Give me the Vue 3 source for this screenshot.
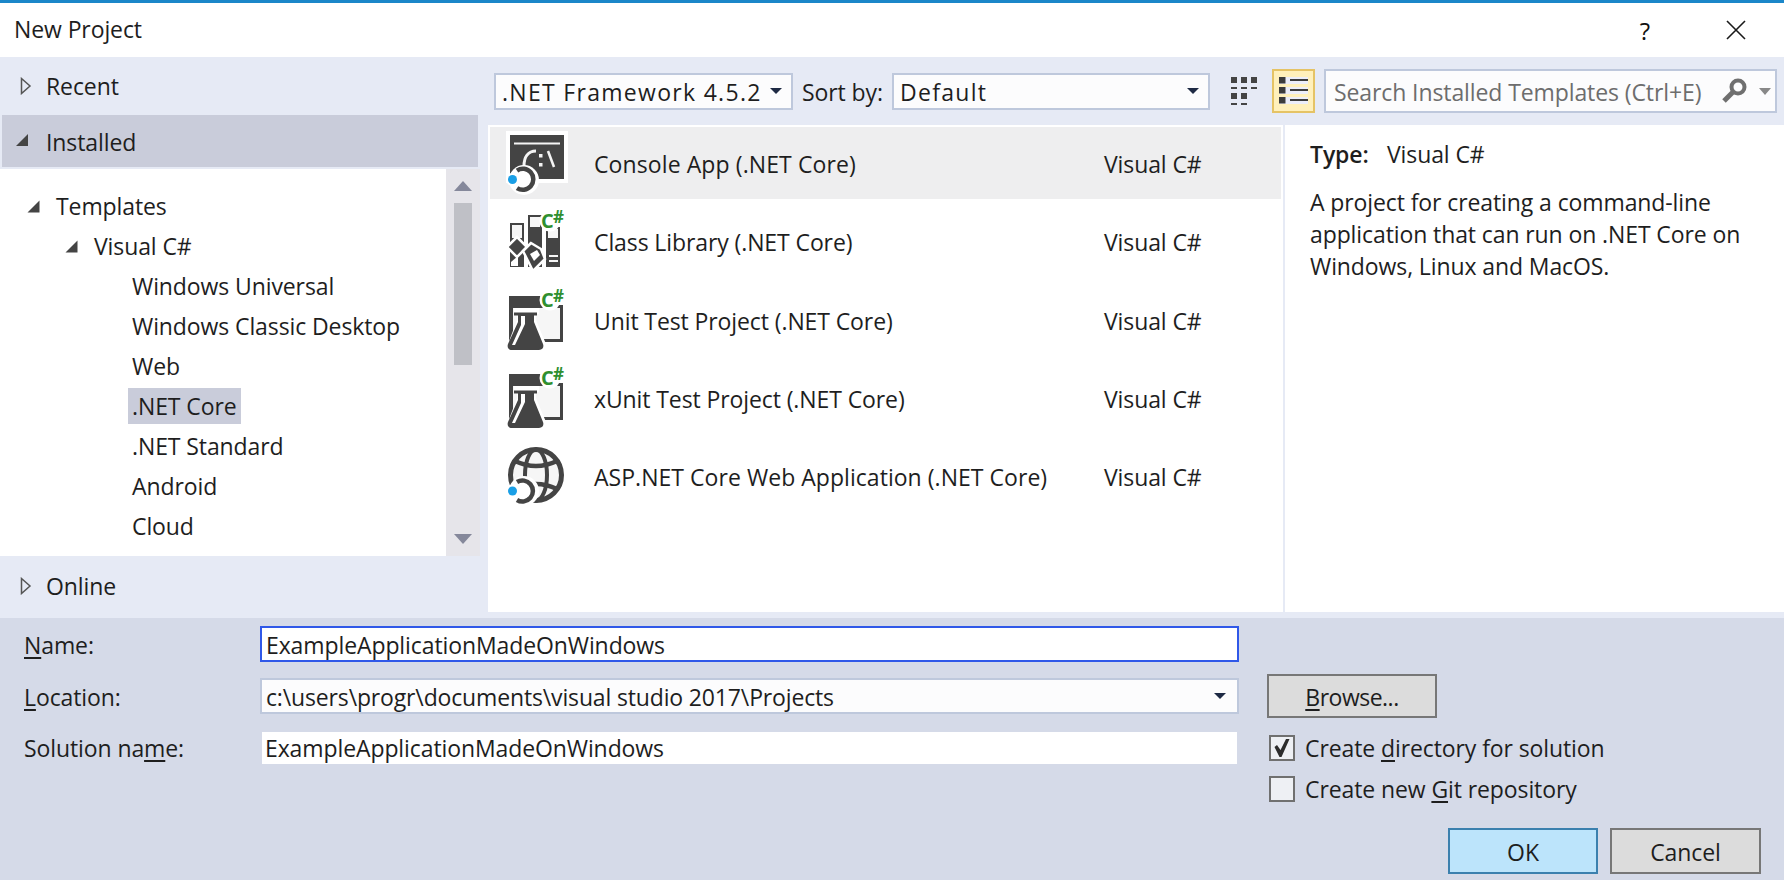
<script setup>
const tree = [
  { label: 'Windows Universal' },
  { label: 'Windows Classic Desktop' },
  { label: 'Web' },
  { label: '.NET Core', selected: true },
  { label: '.NET Standard' },
  { label: 'Android' },
  { label: 'Cloud' }
]
const templates = [
  { name: 'Console App (.NET Core)', icon: 'console', selected: true },
  { name: 'Class Library (.NET Core)', icon: 'library' },
  { name: 'Unit Test Project (.NET Core)', icon: 'test' },
  { name: 'xUnit Test Project (.NET Core)', icon: 'test' },
  { name: 'ASP.NET Core Web Application (.NET Core)', icon: 'web' }
]
</script>

<template>
  <div class="dialog">
    <header class="titlebar">
      <span class="title">New Project</span>
      <span class="help">?</span>
      <svg class="close" width="20" height="20" viewBox="0 0 20 20"><path d="M1 1L19 19M19 1L1 19" stroke="#1a1a1a" stroke-width="1.6" fill="none"/></svg>
    </header>

    <section class="upper">
      <aside class="left">
        <div class="head recent">
          <svg class="arrow" width="12" height="18" viewBox="0 0 12 18"><path d="M1.5 1.5L10 9L1.5 16.5Z" fill="none" stroke="#555" stroke-width="1.5"/></svg>
          <span>Recent</span>
        </div>
        <div class="head installed">
          <svg class="arrow-down" width="14" height="14" viewBox="0 0 14 14"><path d="M13 1V13H1Z" fill="#444"/></svg>
          <span>Installed</span>
        </div>
        <div class="treewrap">
          <div class="tree">
            <div class="node lvl0">
              <svg width="13" height="13" viewBox="0 0 13 13"><path d="M12.5 .5V12.5H.5Z" fill="#444"/></svg>
              <span>Templates</span>
            </div>
            <div class="node lvl1">
              <svg width="13" height="13" viewBox="0 0 13 13"><path d="M12.5 .5V12.5H.5Z" fill="#444"/></svg>
              <span>Visual C#</span>
            </div>
            <div v-for="t in tree" :key="t.label" class="node lvl2">
              <span class="leaf" :class="{ on: t.selected }">{{ t.label }}</span>
            </div>
          </div>
          <div class="scrollbar">
            <span class="sb-up"></span>
            <span class="sb-thumb"></span>
            <span class="sb-down"></span>
          </div>
        </div>
        <div class="head online">
          <svg class="arrow" width="12" height="18" viewBox="0 0 12 18"><path d="M1.5 1.5L10 9L1.5 16.5Z" fill="none" stroke="#555" stroke-width="1.5"/></svg>
          <span>Online</span>
        </div>
      </aside>

      <div class="main">
        <div class="toolbar">
          <div class="combo framework"><span>.NET Framework 4.5.2</span><i class="caret"></i></div>
          <span class="sort">Sort by:</span>
          <div class="combo sortval"><span>Default</span><i class="caret"></i></div>
          <svg class="gridicon" width="28" height="29" viewBox="0 0 28 29" fill="#444">
            <rect x="1" y="0" width="6" height="6"/><rect x="11" y="0" width="6" height="6"/><rect x="21" y="0" width="6" height="6"/>
            <rect x="1" y="10" width="6" height="2"/><rect x="11" y="10" width="6" height="2"/><rect x="21" y="10" width="6" height="2"/>
            <rect x="1" y="16" width="6" height="6"/><rect x="11" y="16" width="6" height="6"/>
            <rect x="1" y="26" width="6" height="2"/><rect x="11" y="26" width="6" height="2"/>
          </svg>
          <div class="listbtn">
            <svg width="39" height="40" viewBox="0 0 39 40">
              <rect x="5" y="6" width="29" height="7" fill="#eceefa"/><rect x="5" y="16" width="29" height="7" fill="#eceefa"/><rect x="5" y="26" width="29" height="7" fill="#eceefa"/>
              <g fill="#3c3c3c">
                <rect x="5" y="6" width="6.5" height="6.5"/><rect x="5" y="16" width="6.5" height="6.5"/><rect x="5" y="26" width="6.5" height="6.5"/>
                <rect x="16" y="8" width="18" height="2"/><rect x="16" y="18" width="18" height="2"/><rect x="16" y="28" width="18" height="2"/>
              </g>
            </svg>
          </div>
          <div class="search">
            <span class="placeholder">Search Installed Templates (Ctrl+E)</span>
            <svg class="lens" width="27" height="26" viewBox="0 0 27 26"><circle cx="17" cy="9" r="6.5" fill="none" stroke="#6f6f6f" stroke-width="4"/><path d="M12 14L3 23" stroke="#6f6f6f" stroke-width="5" fill="none"/></svg>
            <i class="search-caret"></i>
          </div>
        </div>

        <div class="content">
          <div class="list">
            <div v-for="t in templates" :key="t.name" class="row" :class="{ on: t.selected }">
              <svg class="ticon" width="64" height="70" viewBox="0 0 64 70">
                <template v-if="t.icon === 'console'">
                  <rect x="2" y="4" width="62" height="52" fill="#fff"/>
                  <rect x="6" y="8" width="54" height="44" fill="#444"/>
                  <rect x="10" y="15.5" width="46" height="2" fill="#f4f4f4"/>
                  <path d="M32 24C24 24 20 30 20 39" fill="none" stroke="#f4f4f4" stroke-width="3"/>
                  <rect x="35" y="27" width="3.5" height="3.5" fill="#f4f4f4"/><rect x="35" y="36" width="3.5" height="3.5" fill="#f4f4f4"/>
                  <path d="M44 24L50 40" stroke="#f4f4f4" stroke-width="2.5" fill="none"/>
                  <circle cx="20" cy="53" r="15" fill="#fff"/>
                  <path d="M13 43.5A10.5 10.5 0 1 1 13 61" fill="none" stroke="#444" stroke-width="4.5"/>
                  <circle cx="8.5" cy="52.5" r="6.5" fill="#fff"/>
                  <circle cx="8.5" cy="52.5" r="4.5" fill="#1a9fe6"/>
                </template>
                <template v-else-if="t.icon === 'library'">
                  <g fill="#444">
                    <rect x="6" y="18" width="14" height="44"/><rect x="24" y="10" width="14" height="52"/><rect x="42" y="22" width="14" height="40"/>
                  </g>
                  <rect x="8" y="20" width="10" height="13" fill="#f6f6f6"/>
                  <rect x="26" y="12" width="10" height="10" fill="#f6f6f6"/>
                  <rect x="44" y="24" width="10" height="9" fill="#f6f6f6"/>
                  <rect x="45" y="50" width="9" height="2" fill="#f6f6f6"/><rect x="45" y="55" width="9" height="2" fill="#f6f6f6"/>
                  <path d="M13 32L3 42L13 52L23 42Z" fill="#444" stroke="#fff" stroke-width="2.5"/>
                  <path d="M27 38L19 46L29 66L41 54L37 44Z" fill="#444" stroke="#fff" stroke-width="2.5"/>
                  <path d="M7 57L14 51V61H7Z" fill="#fff"/>
                  <path d="M26 49L33 45L36 50L30 56Z" fill="#fff"/>
                  <circle cx="46" cy="16" r="10.5" fill="#fff"/>
                  <text x="37" y="22.5" class="cs">C</text>
                  <text x="49" y="18" class="sharp">#</text>
                </template>
                <template v-else-if="t.icon === 'test'">
                  <path d="M5 12H59V58H5Z" fill="#444"/>
                  <rect x="9" y="24" width="47" height="31" fill="#f6f6f6"/>
                  <path d="M2 69L4 60L13 36V30H10V24H35V30H32V36L42 60L41 69Z" fill="#fff"/>
                  <path d="M10 28.5H33V31.5H30V38L39 60C40 63 39 66 35 66H8C4 66 3 63 4 60L14 38V31.5H10Z" fill="#444"/>
                  <path d="M17 32H21V40L11 61H8L17 41Z" fill="#fff"/>
                  <circle cx="46" cy="16" r="10.5" fill="#fff"/>
                  <rect x="48" y="6" width="14" height="15" fill="#fff"/>
                  <text x="37" y="22.5" class="cs">C</text>
                  <text x="49" y="18" class="sharp">#</text>
                </template>
                <template v-else>
                  <circle cx="32" cy="35" r="25.5" fill="#f6f6f6" stroke="#444" stroke-width="5"/>
                  <ellipse cx="32" cy="35" rx="11" ry="25.5" fill="none" stroke="#444" stroke-width="4"/>
                  <path d="M11 21Q32 31 53 21M11 49Q32 39 53 49" stroke="#444" stroke-width="4.5" fill="none"/>
                  <circle cx="20" cy="51" r="15" fill="#fff"/>
                  <path d="M13 42A10.5 10.5 0 1 1 13 60" fill="none" stroke="#444" stroke-width="4.5"/>
                  <circle cx="8.5" cy="51" r="6.5" fill="#fff"/>
                  <circle cx="8.5" cy="51" r="4.5" fill="#1a9fe6"/>
                </template>
              </svg>
              <span class="tname" :class="t.icon">{{ t.name }}</span>
              <span class="tlang">Visual C#</span>
            </div>
          </div>
          <div class="info">
            <div class="type"><b>Type:</b><span>Visual C#</span></div>
            <p class="desc">A project for creating a command-line<br>application that can run on .NET Core on<br>Windows, Linux and MacOS.</p>
          </div>
        </div>
      </div>
    </section>

    <section class="lower">
      <div class="form">
        <div class="frow">
          <label class="flabel"><u>N</u>ame:</label>
          <div class="field active">ExampleApplicationMadeOnWindows</div>
        </div>
        <div class="frow">
          <label class="flabel"><u>L</u>ocation:</label>
          <div class="field idle"><span>c:\users\progr\documents\visual studio 2017\Projects</span><i class="caret"></i></div>
        </div>
        <div class="frow sol">
          <label class="flabel">Solution na<u>m</u>e:</label>
          <div class="field plain">ExampleApplicationMadeOnWindows</div>
        </div>
      </div>
      <div class="side">
        <button class="btn browse"><span><u>B</u>rowse...</span></button>
        <div class="check first">
          <span class="box"><svg width="22" height="22" viewBox="0 0 22 22"><path d="M3.5 10L6 8L9.5 13L15 2H18.5L10.5 20H8.5Z" fill="#2c2c2c"/></svg></span>
          <span>Create <u>d</u>irectory for solution</span>
        </div>
        <div class="check second">
          <span class="box"></span>
          <span>Create new <u>G</u>it repository</span>
        </div>
        <div class="actions">
          <button class="btn ok">OK</button>
          <button class="btn cancel">Cancel</button>
        </div>
      </div>
    </section>
  </div>
</template>

<style scoped>
.dialog {
  width: 1784px;
  height: 880px;
  display: flex;
  flex-direction: column;
  overflow: hidden;
  background: #fff;
  font-family: "Open Sans", "Noto Sans", sans-serif;
  font-size: 23px;
  letter-spacing: -0.1px;
  color: #1e1e1e;
}
u { text-underline-offset: 3px; text-decoration-thickness: 1.5px; }
.titlebar {
  box-sizing: border-box;
  height: 57px;
  border-top: 3px solid #1b87c9;
  display: flex;
  align-items: center;
  padding-left: 14px;
}
.title { flex: 1; position: relative; top: -1px; }
.help { margin-right: 76px; font-size: 24px; color: #111; }
.close { margin-right: 38px; }

.upper { height: 561px; display: flex; background: #e6eaf5; }
.left { width: 480px; margin-right: 8px; display: flex; flex-direction: column; }
.head { display: flex; align-items: center; }
.recent { height: 58px; padding-left: 20px; }
.recent .arrow { margin-right: 14px; }
.installed { height: 52px; width: 476px; margin: 0 0 2px 2px; background: #c9ccda; padding: 2px 0 0 13px; box-sizing: border-box; }
.arrow-down { margin-right: 17px; margin-top: -4px; }
.online { height: 62px; padding-left: 20px; padding-bottom: 3px; box-sizing: border-box; }
.online .arrow { margin-right: 14px; }
.treewrap { height: 387px; display: flex; }
.tree { width: 446px; background: #fff; padding-top: 17px; box-sizing: border-box; }
.node { height: 40px; display: flex; align-items: center; }
.lvl0 { padding-left: 27px; }
.lvl0 svg { margin-right: 16px; }
.lvl1 { padding-left: 65px; }
.lvl1 svg { margin-right: 16px; }
.lvl2 { padding-left: 128px; }
.leaf { height: 36px; line-height: 36px; padding: 0 4px; }
.leaf.on { background: #c9ccda; letter-spacing: -0.1px; }
.scrollbar { width: 34px; background: #e6e5ea; position: relative; }
.sb-thumb { position: absolute; left: 8px; top: 34px; width: 18px; height: 162px; background: #bfc0c6; }
.sb-up, .sb-down { position: absolute; left: 8px; width: 0; height: 0; border-left: 9px solid transparent; border-right: 9px solid transparent; }
.sb-up { top: 12px; border-bottom: 10px solid #85889b; }
.sb-down { top: 365px; border-top: 10px solid #85889b; }

.main { flex: 1; display: flex; flex-direction: column; min-width: 0; }
.toolbar { height: 68px; display: flex; align-items: center; padding-left: 6px; }
.combo {
  box-sizing: border-box;
  height: 37px;
  display: flex;
  align-items: center;
  justify-content: space-between;
  padding: 2px 9px 0 6px;
  border: 2px solid #bec8dc;
  background: #fcfcfd;
  letter-spacing: 1.3px;
}
.caret { width: 0; height: 0; border-left: 6px solid transparent; border-right: 6px solid transparent; border-top: 6px solid #1e2a44; margin-top: -2px; }
.framework { width: 299px; }
.sort { margin: 0 9px; width: 81px; white-space: nowrap; padding-top: 1px; }
.sortval { width: 318px; }
.gridicon { margin-left: 20px; }
.listbtn { box-sizing: border-box; width: 43px; height: 44px; margin-left: 14px; border: 2px solid #e5c365; background: #fff0bb; }
.listbtn svg { display: block; }
.search {
  box-sizing: border-box;
  width: 453px;
  height: 44px;
  margin-left: 9px;
  border: 2px solid #bec8dc;
  background: #fcfcfd;
  display: flex;
  align-items: center;
  padding-left: 8px;
  color: #6d6d6d;
}
.placeholder { width: 387px; white-space: nowrap; padding-top: 2px; }
.search-caret { margin-left: 11px; width: 0; height: 0; border-left: 6px solid transparent; border-right: 6px solid transparent; border-top: 7px solid #888; }

.content { height: 487px; display: flex; background: #fff; }
.list { width: 795px; padding: 2px 2px 0 2px; box-sizing: border-box; }
.row { height: 78.25px; display: flex; align-items: center; position: relative; }
.row.on { height: 72px; margin-bottom: 6.25px; background: #eeeeef; }
.ticon { position: absolute; left: 14px; top: 0; overflow: visible; }
.cs { font-family: "Open Sans", sans-serif; font-weight: 700; font-size: 20px; fill: #2f8f2f; letter-spacing: 0; }
.sharp { font-family: "Open Sans", sans-serif; font-weight: 700; font-size: 17px; fill: #2f8f2f; letter-spacing: 0; }
.tname { margin-left: 104px; width: 510px; white-space: nowrap; position: relative; top: -2px; }
.tname.console { letter-spacing: 0.1px; }
.tname.web { letter-spacing: 0.04px; }
.tlang { white-space: nowrap; position: relative; top: -2px; }
.row.on .tname, .row.on .tlang { top: 1px; }
.info { flex: 1; border-left: 2px solid #e6eaf5; padding: 13px 0 0 25px; line-height: 32px; }
.type { display: flex; }
.type b { font-weight: 600; width: 77px; }
.desc { margin: 16px 0 0; }

.lower { flex: 1; background: #d5dae8; display: flex; }
.form { width: 1267px; padding: 8px 0 0 24px; box-sizing: border-box; }
.frow { display: flex; align-items: center; margin-bottom: 16px; }
.frow.sol { margin-top: 18px; }
.flabel { width: 236px; padding-top: 2px; }
.frow.sol .flabel { padding-top: 0; }
.field { box-sizing: border-box; width: 979px; height: 36px; display: flex; align-items: center; justify-content: space-between; padding: 2px 11px 0 4px; background: #fff; }
.active { border: 2px solid #3058e8; }
.idle { border: 2px solid #bec8dc; background: #fcfcfd; }
.idle span { letter-spacing: -0.15px; }
.idle .caret { margin-top: -2px; }
.plain { width: 975px; height: 32px; margin-left: 2px; padding: 0 11px 0 3px; }
.side { flex: 1; padding-top: 56px; }
.btn {
  font: inherit;
  letter-spacing: inherit;
  color: inherit;
  box-sizing: border-box;
  border: 2px solid #777;
  background: #dcdcdc;
  padding: 2px 0 0;
  display: block;
}
.browse { width: 170px; height: 44px; letter-spacing: -0.5px; }
.check { display: flex; align-items: center; height: 26px; }
.check.first { margin-top: 17px; margin-left: 2px; }
.check.second { margin-top: 15px; margin-left: 2px; }
.box { box-sizing: border-box; width: 26px; height: 26px; border: 2px solid #707070; background: #eef0f4; margin-right: 10px; display: block; }
.box svg { display: block; }
.actions { display: flex; gap: 12px; margin: 26px 0 0 181px; }
.ok { width: 150px; height: 46px; background: #bce4fb; border-color: #3b80ae; }
.cancel { width: 151px; height: 46px; }
</style>
